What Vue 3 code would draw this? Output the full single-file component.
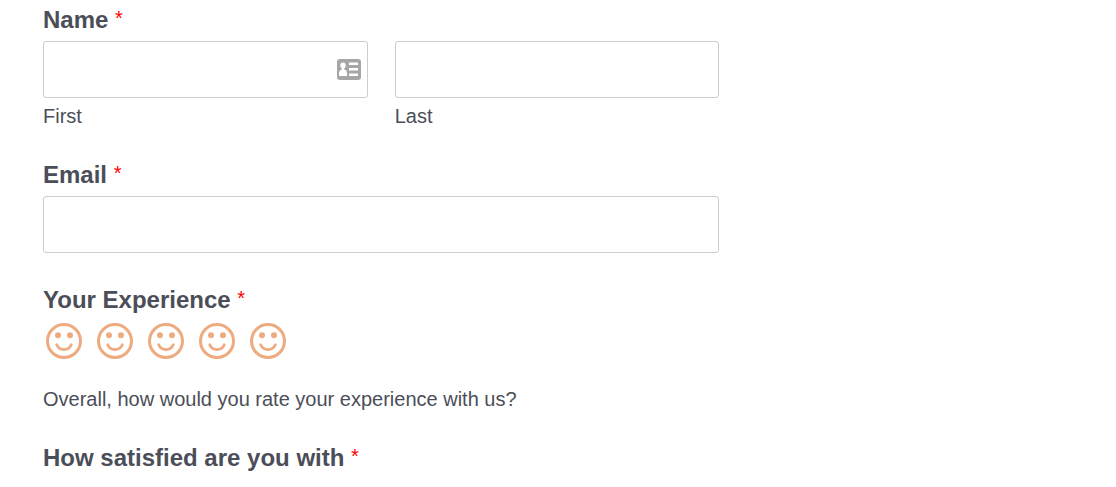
<script setup>
import { ref } from 'vue'

const first = ref('')
const last = ref('')
const email = ref('')
const rating = ref(0)
</script>

<template>
  <form class="form" @submit.prevent>
    <fieldset class="field">
      <legend class="label">Name <span class="required">*</span></legend>
      <div class="names">
        <div class="column">
          <div class="control">
            <input id="first" v-model="first" class="input" type="text" required />
            <svg class="contact" viewBox="0 0 24 21" aria-hidden="true">
              <rect width="24" height="21" rx="3" fill="#a6a6a8" />
              <g fill="#fff">
                <ellipse cx="6" cy="6.5" rx="2.7" ry="3" />
                <path d="M4.8 8h2.4v2.5q2.8.8 2.8 3.5v3H2v-3q0-2.700 2.800-3.500z" />
                <path d="M12 3.500h9v2.500h-9zM12 9h9v2.500h-9zM12 14.500h9v2.500h-9z" />
              </g>
            </svg>
          </div>
          <label class="sublabel" for="first">First</label>
        </div>
        <div class="column">
          <input id="last" v-model="last" class="input" type="text" required />
          <label class="sublabel" for="last">Last</label>
        </div>
      </div>
    </fieldset>

    <div class="field">
      <label class="label" for="email">Email <span class="required">*</span></label>
      <input id="email" v-model="email" class="input" type="email" required />
    </div>

    <fieldset class="field">
      <legend class="label">Your Experience <span class="required">*</span></legend>
      <div class="ratings">
        <label v-for="n in 5" :key="n" class="rating">
          <input v-model="rating" class="radio" type="radio" name="rating" :value="n" :aria-label="`Rate ${n} out of 5`" />
          <svg class="face" viewBox="0 0 36 36" aria-hidden="true">
            <circle cx="18" cy="18" r="16.5" fill="none" stroke="#eeab80" stroke-width="3" />
            <circle cx="12" cy="12.2" r="3" fill="#eeab80" />
            <circle cx="24" cy="12.2" r="3" fill="#eeab80" />
            <path d="M10.700 21.800C13.500 28.200 22.500 28.200 25.300 21.800" fill="none" stroke="#eeab80" stroke-width="2.8" stroke-linecap="round" />
          </svg>
        </label>
      </div>
      <p class="description">Overall, how would you rate your experience with us?</p>
    </fieldset>

    <div class="label">How satisfied are you with <span class="required">*</span></div>
  </form>
</template>

<style>
body {
  margin: 0;
  background: #fff;
}
</style>

<style scoped>
.form {
  box-sizing: border-box;
  width: 65%;
  padding: 4px 6px 0 43px;
  color: #4b4e58;
  font: 20px/24px "Liberation Sans", Arial, sans-serif;
}
.field {
  min-width: 0;
  margin: 0 0 31px;
  padding: 0;
  border: 0;
}
.label {
  display: block;
  padding: 0 0 5px;
  font-size: 24px;
  font-weight: 700;
  line-height: 32px;
}
.required {
  color: #f00;
  font-size: 20px;
  font-weight: 400;
  line-height: 1;
  vertical-align: 3px;
}
.names {
  display: grid;
  grid-template-columns: 1fr 1fr;
  gap: 27px;
}
.control {
  position: relative;
}
.input {
  display: block;
  box-sizing: border-box;
  width: 100%;
  height: 57px;
  padding: 0 12px;
  border: 1px solid #ccc;
  border-radius: 3px;
  background: #fff;
  color: inherit;
  font: inherit;
}
.contact {
  position: absolute;
  top: 18px;
  right: 7px;
  width: 24px;
  height: 21px;
}
.sublabel {
  display: block;
  margin-top: 6px;
}
.ratings {
  display: flex;
  gap: 15px;
  padding: 2px 0 0 3px;
}
.rating {
  position: relative;
  width: 36px;
  height: 36px;
}
.radio {
  position: absolute;
  inset: 0;
  width: 100%;
  height: 100%;
  margin: 0;
  opacity: 0;
}
.face {
  display: block;
}
.description {
  margin: 28px 0 0;
}
</style>
